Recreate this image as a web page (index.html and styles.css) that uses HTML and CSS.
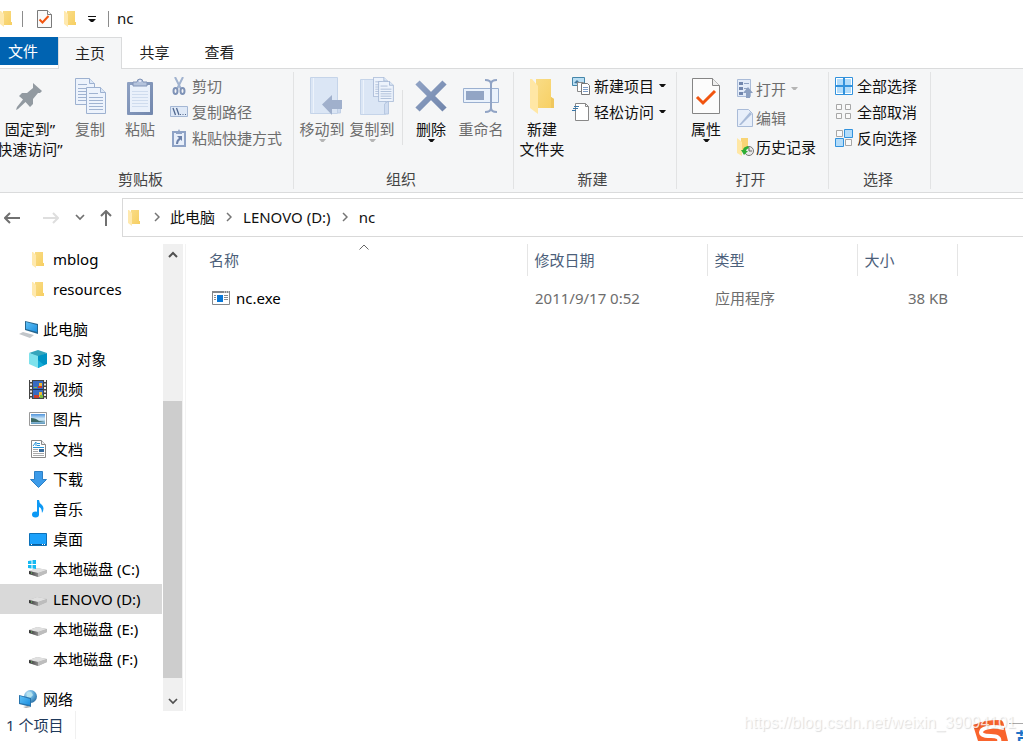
FILE: index.html
```html
<!DOCTYPE html>
<html lang="zh-CN">
<head>
<meta charset="utf-8">
<title>nc</title>
<link rel="stylesheet" href="styles.css">
</head>
<body>
<svg class="sprite" aria-hidden="true">
  <defs>
    <linearGradient id="gold" x1="0" x2="1" y1="0" y2="1"><stop offset="0" stop-color="#f9dc86"/><stop offset="1" stop-color="#f7cf62"/></linearGradient>
    <linearGradient id="steel" x1="0" x2="1" y1="0" y2="1"><stop offset="0" stop-color="#8fa2c4"/><stop offset="1" stop-color="#7287ad"/></linearGradient>
    <linearGradient id="sky" x1="0" x2="1" y1="0" y2="1"><stop offset="0" stop-color="#5fc0f5"/><stop offset="1" stop-color="#1c8fe0"/></linearGradient>
    <linearGradient id="scene" x1="0" x2="0" y1="0" y2="1"><stop offset="0" stop-color="#4f94dc"/><stop offset=".5" stop-color="#d5ecf8"/><stop offset="1" stop-color="#5b96bd"/></linearGradient>
    <linearGradient id="side" x1="0" x2="1"><stop offset="0" stop-color="#333"/><stop offset="1" stop-color="#8b8b8b"/></linearGradient>
    <radialGradient id="globe" cx=".35" cy=".3" r=".8"><stop offset="0" stop-color="#d5f0ff"/><stop offset=".5" stop-color="#5da9d8"/><stop offset="1" stop-color="#25699f"/></radialGradient>
  </defs>
  <symbol id="folder" viewBox="0 0 12 17"><path d="M3 1h8v11h1v3H3z" fill="url(#gold)"/><path d="M0 1h1l3 3v13l-4-3z" fill="#ffe9ae"/></symbol>
  <symbol id="check-page" viewBox="0 0 15 18"><path d="M.5.5h10l4 4v13H.5z" fill="#fafafa" stroke="#7a7a7a"/><path d="M10.500.5v4h4" fill="#fff" stroke="#7a7a7a"/><path d="M2.500 9.500l3 3 6-6.500" fill="none" stroke="#f1540f" stroke-width="2"/></symbol>
  <symbol id="arrow" viewBox="0 0 7 4"><path d="M0 0h7L4.500 3h-2z" fill="currentColor"/></symbol>
  <symbol id="drive" viewBox="0 0 18 14"><path d="M0 8l8-3 10 2v3l-9 4-9-3z" fill="#b5b5b5"/><path d="M0 8l8-3 10 2-9 3z" fill="#e0e0e0"/><path d="M0 8l9 2v4l-9-3z" fill="url(#side)"/><path d="M9 10l9-3v3l-9 4z" fill="#bdbdbd"/><path d="M2 10h1" stroke="#6edb6a"/></symbol>
  <symbol id="chev-right" viewBox="0 0 6 10"><path d="M1 1l4 4-4 4" fill="none" stroke="#757575" stroke-width="1.500"/></symbol>
  <symbol id="chev-down" viewBox="0 0 10 7"><path d="M1 1l4 4 4-4" fill="none" stroke="currentColor" stroke-width="1.700"/></symbol>
  <symbol id="sheet" viewBox="0 0 20 27"><path d="M.5.5h14l5 5v21H.5z" fill="#edf3fc" stroke="#9db1d0"/><path d="M14.500.5v5h5" fill="#dce7f6" stroke="#9db1d0"/><path d="M3 6.500h9M3 10.500h14M3 13.500h14M3 16.500h14M3 19.500h14M3 22.500h14" stroke="#a0b3d1"/></symbol>
</svg>

<header class="titlebar">
  <svg class="ico-folder"><use href="#folder"/></svg>
  <span class="rule"></span>
  <button class="plain" aria-label="属性"><svg width="15" height="18"><use href="#check-page"/></svg></button>
  <button class="plain" aria-label="新建文件夹"><svg class="ico-folder"><use href="#folder"/></svg></button>
  <button class="plain" aria-label="自定义"><svg width="8" height="8" viewBox="0 0 8 8"><path d="M0 1.500h8" stroke="#111"/><path d="M0 4h8L5 7H3z" fill="#111"/></svg></button>
  <span class="rule rule-last"></span>
  <h1 class="title">nc</h1>
</header>

<nav class="tabs">
  <button class="tab tab-file">文件</button>
  <button class="tab tab-active">主页</button>
  <button class="tab">共享</button>
  <button class="tab">查看</button>
</nav>

<div class="ribbon">
  <section class="group group-clip">
    <div class="tools">
      <button class="big big-pin">
        <span class="art"><svg width="28" height="27" viewBox="0 0 28 27"><path d="M17 0l9 8-2 2-2 0-5 6 0 5-3 3-4.500-5L2 26l-2 1 1-3 6-7.500L3 13l3-3h5l6-5V2z" fill="#929aa1"/></svg></span>
        <span>固定到”</span><span>快速访问”</span>
      </button>
      <button class="big off">
        <span class="art"><svg width="31" height="37" viewBox="0 0 31 37"><use href="#sheet" width="20" height="27"/><use href="#sheet" x="11" y="9" width="20" height="27"/></svg></span>
        <span>复制</span>
      </button>
      <button class="big off">
        <span class="art"><svg width="26" height="37" viewBox="0 0 26 37"><rect y="4" width="26" height="33" rx="1" fill="url(#steel)"/><path d="M3 7h20v27H3z" fill="#eaf1fb"/><path d="M5 13.500h16M5 16.500h16M5 19.500h16M5 22.500h16M5 25.500h16M5 28.500h16" stroke="#cfdcee"/><path d="M6 4h4a3 3 0 016 0h4v4H6z" fill="#b4c3dc" stroke="#8093b7"/><circle cx="13" cy="3" r="1" fill="#eef"/></svg></span>
        <span>粘贴</span>
      </button>
      <div class="stack">
        <button class="small off"><span class="mini"><svg width="14" height="18" viewBox="0 0 14 18"><path d="M3 0l6 12M11 0L5 12" stroke="#a1b3cf" stroke-width="2"/><ellipse cx="3.500" cy="14" rx="2" ry="3" fill="none" stroke="#7f93b7" stroke-width="2"/><ellipse cx="10.500" cy="14" rx="2" ry="3" fill="none" stroke="#7f93b7" stroke-width="2"/></svg></span>剪切</button>
        <button class="small off"><span class="mini"><svg width="18" height="12" viewBox="0 0 18 12"><path d="M.5.500h17v10H.5z" fill="#dfe9f7" stroke="#a4b7d4"/><path d="M3 2l2.500 7M6.500 2L9 9" stroke="#52698f" stroke-width="1.300"/><path d="M10 8.500h1M12.500 8.500h1M15 8.500h1" stroke="#52698f"/></svg></span>复制路径</button>
        <button class="small off"><span class="mini"><svg width="14" height="18" viewBox="0 0 14 18"><path d="M1 3h12v14H1z" fill="#e8effa" stroke="#8fa3c6" stroke-width="2"/><path d="M4 2h2l1-2 1 2h2v3H4z" fill="#8fa3c6"/><path d="M5 7h5v5L8.500 10.500Q6 12 6 15H4q0-4 3-6z" fill="#6d82aa"/></svg></span>粘贴快捷方式</button>
      </div>
    </div>
    <h2 class="caption">剪贴板</h2>
  </section>

  <section class="group group-org">
    <div class="tools">
      <button class="big off">
        <span class="art art-shift"><svg width="34" height="38" viewBox="0 0 34 38"><path d="M.5.500h27v36H.5z" fill="#dbe6f5" stroke="#c5d4e9"/><path d="M3.500 1v35" stroke="#edf3fb"/><path d="M27.500 23l3 3v10h-3z" fill="#cfdcf0" stroke="#c1d0e6"/><path d="M12 27.500L22 18v5h10v9H22v6z" fill="#a0b0cc"/></svg></span>
        <span>移动到</span><svg class="drop"><use href="#arrow"/></svg>
      </button>
      <button class="big off">
        <span class="art art-shift"><svg width="34" height="38" viewBox="0 0 34 38"><path d="M.5 2.500h25v35H.5z" fill="#dbe6f5" stroke="#c5d4e9"/><path d="M3.500 3v34" stroke="#edf3fb"/><path d="M24.500 27l4-3v13h-4z" fill="#cfdcf0" stroke="#b7c8e1"/><use href="#sheet" x="13" y="0" width="15" height="20"/><use href="#sheet" x="18" y="4" width="16" height="21"/></svg></span>
        <span>复制到</span><svg class="drop"><use href="#arrow"/></svg>
      </button>
      <span class="divider"></span>
      <button class="big">
        <span class="art"><svg width="32" height="32" viewBox="0 0 32 32"><path d="M2.500 2.500l27 27M29.500 2.500l-27 27" stroke="url(#steel)" stroke-width="6"/></svg></span>
        <span>删除</span><svg class="drop"><use href="#arrow"/></svg>
      </button>
      <button class="big off">
        <span class="art"><svg width="36" height="34" viewBox="0 0 36 34"><path d="M.5 9.500h35v14H.5z" fill="#eaf2fc" stroke="#9bb0d0"/><path d="M3 12h18v9H3z" fill="#92a5c5"/><path d="M22 1q6 0 6 4 0-4 6-4M28 4v26M22 33q6 0 6-4 0 4 6 4" fill="none" stroke="#91a4c5" stroke-width="2"/></svg></span>
        <span>重命名</span>
      </button>
    </div>
    <h2 class="caption">组织</h2>
  </section>

  <section class="group group-new">
    <div class="tools">
      <button class="big">
        <span class="art"><svg width="24" height="35" viewBox="0 0 24 35"><path d="M6 0h15v18l3 2v9H6z" fill="url(#gold)"/><path d="M21 18l3 2v9h-3z" fill="#efc75f"/><path d="M0 0h2l6 7v28l-8-6z" fill="#ffe7a5"/></svg></span>
        <span>新建</span><span>文件夹</span>
      </button>
      <div class="stack">
        <button class="small"><span class="mini"><svg width="18" height="18" viewBox="0 0 18 18"><path d="M.5.500h12v8H.5z" fill="#b9def3" stroke="#4586aa"/><path d="M2 6l3-3 4 4z" fill="#43779b"/><path d="M5.500 5.500h6v9h-6z" fill="#fff" stroke="#888"/><path d="M9.500 6.500h6l2 2v9h-8z" fill="#fff" stroke="#777"/><path d="M11 10.500h5M11 12.500h5M11 14.500h5" stroke="#7d9cc6"/></svg></span>新建项目<svg class="drop"><use href="#arrow"/></svg></button>
        <button class="small"><span class="mini"><svg width="18" height="18" viewBox="0 0 18 18"><path d="M3.500.5h10l3 3v14h-13z" fill="#fff" stroke="#888"/><path d="M13.500.5v3h3" fill="none" stroke="#888"/><path d="M2 3.500h5M1 5.500h5M0 7.500h4" stroke="#3b78a8"/></svg></span>轻松访问<svg class="drop"><use href="#arrow"/></svg></button>
      </div>
    </div>
    <h2 class="caption">新建</h2>
  </section>

  <section class="group group-open">
    <div class="tools">
      <button class="big">
        <span class="art"><svg width="28" height="36" viewBox="0 0 28 36"><path d="M.5.5h20l7 7v28H.5z" fill="#fcfcfc" stroke="#858585"/><path d="M20.500.5v7h7" fill="#eee" stroke="#858585"/><path d="M5 19l6 6 12-12" fill="none" stroke="#f1540f" stroke-width="3"/></svg></span>
        <span>属性</span><svg class="drop"><use href="#arrow"/></svg>
      </button>
      <div class="stack stack-loose">
        <button class="small off"><span class="mini"><svg width="16" height="19" viewBox="0 0 16 19"><path d="M.5.500h13v17H.5z" fill="#e2ebf8" stroke="#a9bbd8"/><path d="M2 3h4v3H2zM2 8h4v3H2zM2 13h4v3H2z" fill="#7186ad"/><path d="M7 4.500h5M7 9.500h3" stroke="#90a4c4"/><path d="M11 8l5 6h-3v5H9v-5H6z" fill="#8b9fc0"/></svg></span>打开<svg class="drop"><use href="#arrow"/></svg></button>
        <button class="small off"><span class="mini"><svg width="16" height="18" viewBox="0 0 16 18"><path d="M.5.500h11l4 4v13H.5z" fill="#e8effa" stroke="#a9bbd8"/><path d="M2 16L13 3l2 2L4 16z" fill="#a9bbd8"/></svg></span>编辑</button>
        <button class="small"><span class="mini"><svg width="17" height="18" viewBox="0 0 17 18"><path d="M4 0h7v13H4z" fill="#f8d475"/><path d="M0 0l5 4v14l-5-3z" fill="#ffe7a5"/><circle cx="12" cy="13" r="4.500" fill="#e9e9e9" stroke="#777"/><path d="M12 13V9.500M12 13h3" stroke="#666"/><path d="M11 8q-5 1-5 4H4l3 5 4-4H9q0-2 3-3z" fill="#2eae35"/></svg></span>历史记录</button>
      </div>
    </div>
    <h2 class="caption">打开</h2>
  </section>

  <section class="group group-select">
    <div class="tools">
      <div class="stack">
        <button class="small"><span class="mini"><svg width="18" height="18" viewBox="0 0 18 18"><path d="M.5.500h17v17H.5z" fill="#fff" stroke="#3292dd"/><path d="M2 2h6v6H2zM10 2h6v6h-6zM2 10h6v6H2zM10 10h6v6h-6z" fill="#b3dcfa"/><path d="M9 0v18M0 9h18" stroke="#3292dd" stroke-width="2"/></svg></span>全部选择</button>
        <button class="small"><span class="mini"><svg width="18" height="18" viewBox="0 0 18 18"><path d="M1.500 1.500h5v5h-5zM10.500 1.500h5v5h-5zM1.500 10.500h5v5h-5zM10.500 10.500h5v5h-5z" fill="#fafafa" stroke="#a7a7a7"/></svg></span>全部取消</button>
        <button class="small"><span class="mini"><svg width="18" height="18" viewBox="0 0 18 18"><path d="M1.500 1.500h6v6h-6zM10.500 10.500h6v6h-6z" fill="#fafafa" stroke="#a7a7a7"/><path d="M9.500.5h8v8h-8zM.5 9.500h8v8h-8z" fill="#b3dcfa" stroke="#3292dd"/></svg></span>反向选择</button>
      </div>
    </div>
    <h2 class="caption">选择</h2>
  </section>
</div>

<div class="address">
  <div class="moves">
    <button class="plain" aria-label="后退"><svg width="16" height="12" viewBox="0 0 16 12"><path d="M6 1L1 6l5 5M1 6h15" fill="none" stroke="#707070" stroke-width="2"/></svg></button>
    <button class="plain" aria-label="前进"><svg width="16" height="12" viewBox="0 0 16 12"><path d="M10 1l5 5-5 5M15 6H0" fill="none" stroke="#dedede" stroke-width="2"/></svg></button>
    <button class="plain recent" aria-label="最近"><svg width="10" height="7"><use href="#chev-down"/></svg></button>
    <button class="plain" aria-label="上移"><svg width="12" height="16" viewBox="0 0 12 16"><path d="M1 6l5-5 5 5M6 1v15" fill="none" stroke="#707070" stroke-width="2"/></svg></button>
  </div>
  <nav class="path" aria-label="路径">
    <svg class="ico-folder"><use href="#folder"/></svg>
    <svg class="chev"><use href="#chev-right"/></svg><a href="#pc">此电脑</a>
    <svg class="chev"><use href="#chev-right"/></svg><a href="#d">LENOVO (D:)</a>
    <svg class="chev"><use href="#chev-right"/></svg><a href="#nc">nc</a>
  </nav>
</div>

<main class="main">
  <nav class="tree" aria-label="导航窗格">
    <a class="node" href="#mblog"><span class="pic"><svg class="ico-folder"><use href="#folder"/></svg></span>mblog</a>
    <a class="node" href="#resources"><span class="pic"><svg class="ico-folder"><use href="#folder"/></svg></span>resources</a>
    <a class="node node-top" href="#pc"><span class="pic"><svg width="19" height="17" viewBox="0 0 19 17"><path d="M6 0l13 3v10L6 9z" fill="#26668f"/><path d="M7 1l11 3v7L7 8z" fill="url(#sky)"/><path d="M0 13l4-2 11 3-4 3z" fill="#c2c6ca"/></svg></span>此电脑</a>
    <a class="node" href="#3d"><span class="pic"><svg width="18" height="18" viewBox="0 0 18 18"><path d="M9 0l9 3-9 4-9-4z" fill="#35a5bb"/><path d="M0 3l9 3v12l-9-4z" fill="#7ee2ec"/><path d="M18 3L9 6v12l9-4z" fill="#0093c4"/><path d="M9 10l6 5-6 3z" fill="#14add8"/></svg></span>3D 对象</a>
    <a class="node" href="#video"><span class="pic"><svg width="18" height="19" viewBox="0 0 18 19"><path d="M0 0h18v19H0z" fill="#444"/><path d="M4 1h10v17H4z" fill="#376bc2"/><path d="M4 9.500h10" stroke="#183360"/><path d="M2 0v19M16 0v19" stroke="#eee" stroke-width="2" stroke-dasharray="2 1.500"/><path d="M10 3h3v4h-3zM10 12h3v5h-3z" fill="#f1bc33"/><path d="M9 6h4v2H9zM5 15h5v3H5z" fill="#c73c2e"/><path d="M5 7h3v1H5zM11 15h3v3h-3z" fill="#7bbd44"/></svg></span>视频</a>
    <a class="node" href="#pictures"><span class="pic"><svg width="18" height="14" viewBox="0 0 18 14"><path d="M.5.500h17v13H.5z" fill="#fff" stroke="#999"/><path d="M2 2h14v10H2z" fill="url(#scene)"/><path d="M2 6q5 0 8 3l6 1H2z" fill="#3b6965"/></svg></span>图片</a>
    <a class="node" href="#docs"><span class="pic"><svg width="15" height="18" viewBox="0 0 15 18"><path d="M.5.500h10l4 4v13H.5z" fill="#fff" stroke="#888"/><path d="M10.500.5v4h4" fill="#eee" stroke="#888"/><path d="M2 6l3-4v4M6 3.500h3M6 5.500h3M2 7.500h11" fill="none" stroke="#2894d6"/><path d="M2 9.500h5M2 11.500h5M2 13.500h11M2 15.500h11" stroke="#aaa"/><path d="M8 9h5v3H8z" fill="#376c9d"/></svg></span>文档</a>
    <a class="node" href="#downloads"><span class="pic"><svg width="17" height="17" viewBox="0 0 17 17"><path d="M4.500.5h8v8h4l-8 8-8-8h4z" fill="#3c9be9" stroke="#2d80c5"/></svg></span>下载</a>
    <a class="node" href="#music"><span class="pic"><svg width="12" height="18" viewBox="0 0 12 18"><ellipse cx="3.500" cy="14.500" rx="3.500" ry="3" fill="#0d99f5"/><path d="M5 15V0h2q0 3 3 5 3 3 0 8 0-5-3-6v8z" fill="#0d99f5"/></svg></span>音乐</a>
    <a class="node" href="#desktop"><span class="pic"><svg width="18" height="13" viewBox="0 0 18 13"><path d="M.5.500h17v12H.5z" fill="#1ba1fb" stroke="#0c71b9"/><path d="M1 11.500h16" stroke="#0c5f9d"/><path d="M2 11.500h1M13 11.500h1M15 11.500h1" stroke="#fff"/></svg></span>桌面</a>
    <a class="node" href="#c"><span class="pic"><svg width="20" height="18" viewBox="0 0 20 18"><use href="#drive" x="1" y="3" width="18" height="14"/><path d="M0 1l3.500-.5V4H0zM4.500 0H8v4H4.500zM0 5h3.500v3.500L0 8zM4.500 5H8v4l-3.500-.5z" fill="#14b9f2"/></svg></span>本地磁盘 (C:)</a>
    <a class="node node-on" href="#d"><span class="pic"><svg class="ico-drive"><use href="#drive"/></svg></span>LENOVO (D:)</a>
    <a class="node" href="#e"><span class="pic"><svg class="ico-drive"><use href="#drive"/></svg></span>本地磁盘 (E:)</a>
    <a class="node" href="#f"><span class="pic"><svg class="ico-drive"><use href="#drive"/></svg></span>本地磁盘 (F:)</a>
    <a class="node node-top" href="#net"><span class="pic"><svg width="18" height="18" viewBox="0 0 18 18"><circle cx="11.500" cy="6.500" r="6.500" fill="url(#globe)"/><path d="M8 3l4-1 2 3-3 3-3-1z" fill="#b4e2ee"/><path d="M0 5l12 3v9L0 14z" fill="#2774ad"/><path d="M1 6l10 3v6L1 13z" fill="url(#sky)"/><path d="M4 17l5-1 3 1-5 1z" fill="#aaa"/></svg></span>网络</a>
  </nav>
  <div class="scroll">
    <button class="plain step" aria-label="向上滚动"><svg width="10" height="7" viewBox="0 0 10 7"><path d="M1 6l4-4 4 4" fill="none" stroke="#505050" stroke-width="2"/></svg></button>
    <div class="track"><div class="thumb"></div></div>
    <button class="plain step" aria-label="向下滚动"><svg width="10" height="7"><use href="#chev-down"/></svg></button>
  </div>
  <div class="files">
    <table class="list">
      <colgroup><col class="c-name"><col class="c-date"><col class="c-type"><col class="c-size"><col></colgroup>
      <thead><tr>
        <th class="sorted">名称<svg class="sort" width="10" height="6" viewBox="0 0 10 6"><path d="M.5 5.500L5 1l4.500 4.500" fill="none" stroke="#666"/></svg></th>
        <th>修改日期</th><th>类型</th><th>大小</th><td></td>
      </tr></thead>
      <tbody><tr>
        <td class="name"><span class="file"><svg width="18" height="14" viewBox="0 0 18 14"><path d="M.5.500h17v13H.5z" fill="#fff" stroke="#85888c"/><path d="M0 1h18" stroke="#85888c" stroke-width="2"/><path d="M12 1h1M14 1h1M16 1h1" stroke="#fff"/><path d="M5 4h6v7H5z" fill="#0877d7"/><path d="M2 4.500h2M2 6.500h2M2 8.500h2M12 4.500h4M12 6.500h4M12 8.500h4" stroke="#8a8d91"/></svg>nc.exe</span></td>
        <td>2011/9/17 0:52</td><td>应用程序</td><td class="num">38 KB</td><td></td>
      </tr></tbody>
    </table>
  </div>
</main>

<footer class="status">
  <span class="count">1 个项目</span>
  <div class="ime">
    <svg width="36" height="30" viewBox="0 0 36 30"><path d="M0 14q10-5 27-5 3 0 4 5l4 16H5z" fill="#f9642d"/><path d="M31 17q-16-3-22 2-4 6 9 6 10 0 8 6" fill="none" stroke="#fff" stroke-width="4"/></svg>
    <span class="ime-mode">英</span>
  </div>
  <span class="mark">https://blog.csdn.net/weixin_39094101</span>
</footer>
</body>
</html>
```
FILE: styles.css
```css
* { box-sizing: border-box; }

body {
  margin: 0;
  height: 100vh;
  display: flex;
  flex-direction: column;
  overflow: hidden;
  background: #fff;
  color: #111;
  font: 15px/20px "Noto Sans", "Noto Sans CJK SC", sans-serif;
}

button {
  margin: 0;
  padding: 0;
  border: 0;
  background: none;
  color: inherit;
  font: inherit;
}

a { color: inherit; text-decoration: none; }
svg { display: block; flex: none; }
.sprite { position: absolute; width: 0; height: 0; }
.ico-folder { width: 12px; height: 17px; }
.ico-drive { width: 18px; height: 14px; }

/* Title bar */
.titlebar {
  display: flex;
  align-items: center;
  height: 37px;
  gap: 12px;
}
.rule { width: 1px; height: 16px; margin: 0 2px 0 -2px; background: #8c8c8c; }
.rule-last { margin: 0 -4px 0 0; }
.title { margin: 0; padding-bottom: 2px; font: inherit; }

/* Tabs */
.tabs {
  display: flex;
  height: 32px;
  flex: none;
  border-bottom: 1px solid #dadbdc;
}
.tab { width: 65px; height: 31px; padding-bottom: 2px; color: #222; }
.tab-file { width: 58px; height: 28px; padding: 0 12px 0 0; background: #0063b1; color: #fff; }
.tab-active {
  width: 64px;
  height: 32px;
  border: 1px solid #dadbdc;
  border-bottom: 0;
  background: #f5f6f7;
}

/* Ribbon */
.ribbon {
  display: flex;
  flex: none;
  height: 124px;
  padding: 3px 0;
  border-bottom: 1px solid #dadbdc;
  background: #f5f6f7;
}
.group {
  display: flex;
  flex-direction: column;
  flex: none;
  border-right: 1px solid #e2e3e4;
}
.tools { display: flex; flex: 1; }
.caption {
  margin: 0;
  padding-right: 8px;
  color: #444;
  font: inherit;
  text-align: center;
}
.group-clip { width: 294px; }
.group-clip .caption { padding-right: 12px; }
.group-org { width: 220px; padding-left: 3px; }
.group-new { width: 163px; padding-left: 3px; }
.group-open { width: 152px; padding-left: 4px; }
.group-select { width: 102px; padding-left: 1px; }
.group-select .caption { padding-right: 4px; }

.big {
  display: flex;
  flex-direction: column;
  align-items: center;
  width: 50px;
  white-space: nowrap;
}
.big-pin { width: 60px; margin-right: 5px; }
.art {
  display: flex;
  align-items: center;
  height: 38px;
  margin: 5px 0 4px;
}
.art-shift { padding-left: 10px; }
.off { color: #6d6d6d; }
.drop { width: 7px; height: 4px; }
.off .drop { color: #b5b5b5; }
.divider { width: 1px; height: 55px; margin: 18px 3px 0 5px; background: #e0e1e2; }

.stack { display: flex; flex-direction: column; padding: 1px 0 0 5px; }
.small {
  display: flex;
  align-items: center;
  gap: 4px;
  height: 26px;
  white-space: nowrap;
}
.stack-loose { padding-top: 2px; }
.stack-loose .small { gap: 2px; height: 29px; }
.small .drop { margin-left: 1px; }
.stack-loose .small .drop { margin-left: 3px; }
.mini { display: flex; justify-content: center; width: 18px; }

/* Address bar */
.address { display: flex; flex: none; padding-top: 5px; }
.moves {
  display: flex;
  flex: none;
  align-items: center;
  justify-content: space-between;
  width: 122px;
  padding: 0 10px 0 4px;
}
.moves .plain:first-child { margin-right: 8px; }
.recent { color: #707070; }
.path {
  display: flex;
  flex: 1;
  align-items: center;
  height: 39px;
  padding: 0 0 1px 5px;
  border: 1px solid #d9d9d9;
  border-right: 0;
}
.chev { width: 6px; height: 10px; margin: 0 11px; }
.path .ico-folder + .chev { margin: 0 10px 0 14px; }

/* Main area */
.main { display: flex; flex: 1; min-height: 0; padding-top: 7px; }
.tree { flex: none; width: 162px; overflow: hidden; color: #000; }
.node {
  display: flex;
  align-items: center;
  gap: 5px;
  height: 30px;
  padding-left: 28px;
  white-space: nowrap;
}
.node-top { margin-top: 10px; padding-left: 18px; }
.node-on { background: #d9d9d9; }
.pic { display: flex; justify-content: center; width: 20px; }

.scroll {
  display: flex;
  flex-direction: column;
  flex: none;
  width: 20px;
  margin-left: 1px;
  background: #f0f0f0;
  color: #505050;
}
.step { display: flex; align-items: center; justify-content: center; height: 20px; }
.track { display: flex; flex: 1; flex-direction: column; }
.track::before { content: ""; flex: 137; }
.track::after { content: ""; flex: 13; }
.thumb { flex: 277; margin-right: 1px; background: #cdcdcd; }

.files { flex: 1; margin-left: 2px; border-left: 1px solid #f3f3f3; }
.list { width: 100%; table-layout: fixed; border-collapse: collapse; color: #6d6d6d; }
.c-name { width: 341px; }
.c-date { width: 180px; }
.c-type { width: 150px; }
.c-size { width: 100px; }
.list th {
  height: 32px;
  padding: 0 7px;
  border-right: 1px solid #e5e5e5;
  color: #4c607a;
  font-weight: normal;
  text-align: left;
}
.list th.sorted { position: relative; padding-left: 23px; }
.sort { position: absolute; top: 0; left: calc(50% + 3px); }
.list tbody td { height: 44px; padding: 0 8px; }
.list .name { padding-left: 26px; color: #000; }
.list .num { padding-right: 9px; text-align: right; }
.file { display: flex; align-items: center; gap: 6px; }

/* Status bar */
.status {
  position: relative;
  display: flex;
  flex: none;
  align-items: flex-start;
  height: 30px;
  overflow: hidden;
  color: #1e395b;
}
.count { padding: 4px 12px 4px 6px; border-right: 1px solid #f0f0f0; }
.ime { position: absolute; right: 0; bottom: 0; display: flex; width: 50px; height: 30px; }
.ime-mode {
  flex: 1;
  height: 18px;
  margin-top: 12px;
  padding-left: 6px;
  border-top: 1px solid #aaa;
  color: #1e73c8;
  font-size: 20px;
  font-weight: bold;
  line-height: 34px;
}
.mark {
  position: absolute;
  right: 7px;
  top: 2px;
  color: rgba(255, 255, 255, 0.8);
  font: 16px/20px "Liberation Sans", sans-serif;
  text-shadow: 1px 1px 1px rgba(0, 0, 0, 0.14);
}
```
